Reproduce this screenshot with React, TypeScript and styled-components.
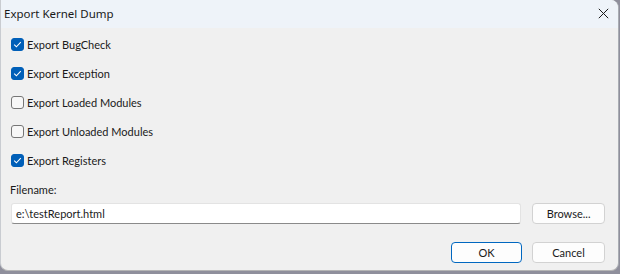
import React, { useState } from "react";
import styled, { createGlobalStyle } from "styled-components";

const GlobalStyle = createGlobalStyle`
	html, body {
		margin: 0;
		padding: 0;
		background: #8f8f9c;
	}
	#root {
		width: 620px;
		height: 274px;
		overflow: hidden;
	}
`;

const Window = styled.div`
	width: 619px;
	height: 271px;
	box-sizing: border-box;
	border-left: 1px solid #c9ccd1;
	border-right: 1px solid #a9adb3;
	border-bottom: 1px solid #b5b5b5;
	border-top-right-radius: 8px;
	border-bottom-left-radius: 8px;
	border-bottom-right-radius: 8px;
	background: #f0f0f0;
	overflow: hidden;
	display: flex;
	flex-direction: column;
	font-family: Lato, "Noto Sans", sans-serif;
	font-size: 11px;
	color: #1a1a1a;
`;

const TitleBar = styled.div`
	height: 28px;
	flex: none;
	display: flex;
	align-items: center;
	justify-content: space-between;
	padding: 0 8px 2px 3px;
	box-sizing: border-box;
	background: #eef3f9;
`;

const Title = styled.span`
	font-family: "Noto Sans", sans-serif;
	font-size: 11.5px;
	color: #1a1a1a;
`;

const CloseButton = styled.button`
	width: 14px;
	height: 14px;
	padding: 0;
	border: none;
	background: none;
	display: flex;
	align-items: center;
	justify-content: center;
`;

const Body = styled.div`
	flex: 1;
	display: flex;
	flex-direction: column;
	padding: 2px 13px 0 9px;
`;

const CheckList = styled.div`
	display: flex;
	flex-direction: column;
`;

const CheckRow = styled.label`
	height: 29px;
	display: flex;
	align-items: center;
	gap: 3px;
	cursor: default;
`;

const Box = styled.span<{ $checked: boolean }>`
	width: 13px;
	height: 13px;
	box-sizing: border-box;
	border-radius: 3px;
	display: flex;
	align-items: center;
	justify-content: center;
	margin-left: 1px;
	background: ${({ $checked }) => ($checked ? "#005fb8" : "#f7f7f7")};
	border: 1px solid ${({ $checked }) => ($checked ? "#005fb8" : "#767676")};
`;

const FieldLabel = styled.div`
	margin-top: 7px;
	line-height: 16px;
	padding-left: 0;
`;

const FileRow = styled.div`
	margin-top: 5px;
	display: flex;
	gap: 11px;
`;

const TextInput = styled.input`
	width: 512px;
	height: 21px;
	box-sizing: border-box;
	margin-left: 1px;
	padding: 0 0 0 4px;
	border: 1px solid #e3e3e3;
	border-bottom-color: #8a8a8a;
	border-radius: 3px;
	background: #ffffff;
	font-family: inherit;
	font-size: 11px;
	color: #1a1a1a;
	outline: none;
`;

const Button = styled.button<{ $primary?: boolean; $w?: number }>`
	width: ${({ $w }) => $w ?? 73}px;
	height: 21px;
	box-sizing: border-box;
	padding: 0;
	border-radius: 4px;
	background: #fdfdfd;
	border: 1px solid ${({ $primary }) => ($primary ? "#0067c0" : "#d2d2d2")};
	font-family: inherit;
	font-size: 11px;
	color: #1a1a1a;
`;

const Footer = styled.div`
	margin-top: 18px;
	display: flex;
	justify-content: flex-end;
	gap: 10px;
`;

const options = [
	{ label: "Export BugCheck", checked: true },
	{ label: "Export Exception", checked: true },
	{ label: "Export Loaded Modules", checked: false },
	{ label: "Export Unloaded Modules", checked: false },
	{ label: "Export Registers", checked: true },
];

const Check = () => (
	<svg width="9" height="9" viewBox="0 0 9 9">
		<path d="M1.2 4.6 L3.4 6.8 L7.8 2.2" fill="none" stroke="#fff" strokeWidth="1.1" />
	</svg>
);

export default function App() {
	const [state, setState] = useState(options.map((o) => o.checked));

	return (
		<>
			<GlobalStyle />
			<Window>
				<TitleBar>
					<Title>Export Kernel Dump</Title>
					<CloseButton>
						<svg width="11" height="11" viewBox="0 0 11 11">
							<path d="M0.8 0.8 L10.2 10.2 M10.2 0.8 L0.8 10.2" stroke="#1a1a1a" strokeWidth="1" />
						</svg>
					</CloseButton>
				</TitleBar>
				<Body>
					<CheckList>
						{options.map((o, i) => (
							<CheckRow
								key={o.label}
								onClick={() => setState((s) => s.map((v, j) => (j === i ? !v : v)))}
							>
								<Box $checked={state[i]}>{state[i] && <Check />}</Box>
								{o.label}
							</CheckRow>
						))}
					</CheckList>
					<FieldLabel>Filename:</FieldLabel>
					<FileRow>
						<TextInput defaultValue="e:\testReport.html" />
						<Button>Browse...</Button>
					</FileRow>
					<Footer>
						<Button $primary $w={71}>OK</Button>
						<Button>Cancel</Button>
					</Footer>
				</Body>
			</Window>
		</>
	);
}
